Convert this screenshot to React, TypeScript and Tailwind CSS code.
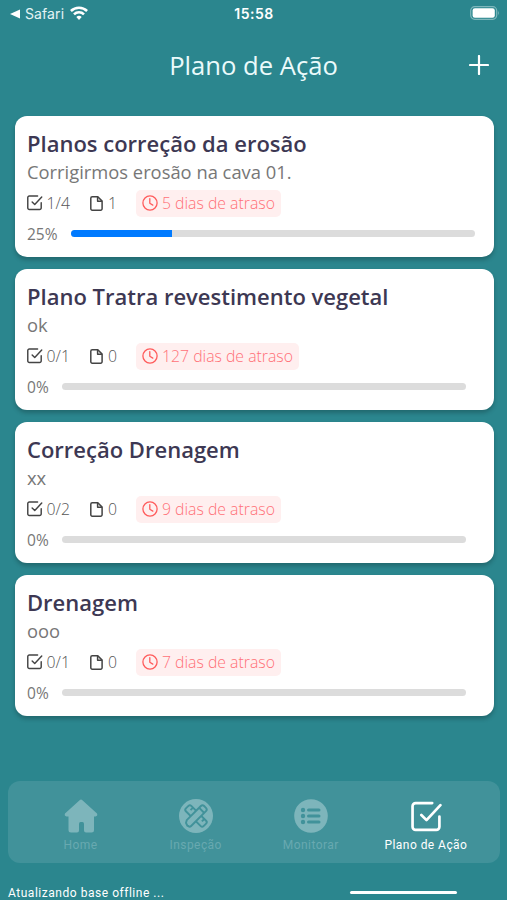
type Plan = {
  title: string;
  description: string;
  tasks: string;
  files: string;
  delay: string;
  progress: number;
};

const plans: Plan[] = [
  { title: 'Planos correção da erosão', description: 'Corrigirmos erosão na cava 01.', tasks: '1/4', files: '1', delay: '5 dias de atraso', progress: 25 },
  { title: 'Plano Tratra revestimento vegetal', description: 'ok', tasks: '0/1', files: '0', delay: '127 dias de atraso', progress: 0 },
  { title: 'Correção Drenagem', description: 'xx', tasks: '0/2', files: '0', delay: '9 dias de atraso', progress: 0 },
  { title: 'Drenagem', description: 'ooo', tasks: '0/1', files: '0', delay: '7 dias de atraso', progress: 0 },
];

function CheckSquare({ className, strokeWidth }: { className: string; strokeWidth: number }) {
  return (
    <svg viewBox="0 0 30 30" className={className} fill="none" stroke="currentColor" strokeWidth={strokeWidth} strokeLinecap="round" strokeLinejoin="round">
      <path d="M20.5 2H4.5A3 3 0 0 0 1.5 5v20a3 3 0 0 0 3 3h20a3 3 0 0 0 3-3V15" />
      <path d="M10 13.5l5 5L28.5 4" />
    </svg>
  );
}

function FileIcon() {
  return (
    <svg viewBox="0 0 13 15" className="h-[15px] w-[13px]" fill="none" stroke="#444" strokeWidth="1.5" strokeLinejoin="round">
      <path d="M2.2.8h5.6l4.3 4.3v7.7a1.4 1.4 0 0 1-1.4 1.4H2.2A1.4 1.4 0 0 1 .8 12.8V2.2A1.4 1.4 0 0 1 2.2.8z" />
      <path d="M7.6.8v4.5h4.5" />
    </svg>
  );
}

function ClockIcon() {
  return (
    <svg viewBox="0 0 16 16" className="-mt-px h-4 w-4 shrink-0" fill="none" stroke="#ff5b5b" strokeWidth="1.3" strokeLinecap="round" strokeLinejoin="round">
      <circle cx="8" cy="8" r="7.1" />
      <path d="M7.8 3.6v4.7l3 1.8" />
    </svg>
  );
}

function PlanCard({ plan }: { plan: Plan }) {
  return (
    <article className="h-[141px] rounded-[12px] bg-white pl-[12.5px] pt-[13px] shadow-[0_3px_4px_rgba(0,0,0,0.22)]">
      <h2 className="h-[29px] whitespace-nowrap text-[22px] font-semibold leading-[29px] text-[#3d3853]">{plan.title}</h2>
      <p className="h-[26px] whitespace-nowrap text-[18.35px] leading-[27px] text-[#777]">{plan.description}</p>
      <div className="mt-[6px] flex h-[27px] items-center text-[15.8px] font-light leading-[27px] text-[#555]">
        <div className="flex w-[63px] items-center gap-[4px]">
          <CheckSquare className="-mt-px h-[15.5px] w-[15.5px] text-[#444]" strokeWidth={2.8} />
          <span>{plan.tasks}</span>
        </div>
        <div className="flex w-[46px] items-center gap-[5px]">
          <FileIcon />
          <span>{plan.files}</span>
        </div>
        <div className="flex h-[27px] items-center gap-[4px] rounded-[5px] bg-[#ffefef] px-[6px] text-[#ff7178]">
          <ClockIcon />
          <span className="whitespace-nowrap">{plan.delay}</span>
        </div>
      </div>
      <div className="mt-[6px] flex h-[21px] items-center text-[15.5px] leading-[22px] text-[#777]">
        <span>{plan.progress}%</span>
        <div className="ml-[13px] h-[7px] w-[404.5px] overflow-hidden rounded-full bg-[#dcdcdc]">
          <div className="h-full bg-[#007aff]" style={{ width: `${plan.progress}%` }} />
        </div>
      </div>
    </article>
  );
}

function HomeIcon() {
  return (
    <svg viewBox="0 0 34 34" className="h-[34px] w-[34px]" fill="#7db5bb">
      <path d="M15.6 1.2Q17 0 18.4 1.2L33 14.5Q34 16.8 31.5 17.5H30V31Q30 33.5 27.5 33.5H22Q20 33.5 20 31.5V25Q20 23 18.5 23H16.5Q15 23 15 25V31.5Q15 33.5 13 33.5H7Q4.5 33.5 4.5 31V17.5H2.5Q0 16.8 1 14.5Z" />
    </svg>
  );
}

function ToolsIcon() {
  return (
    <svg viewBox="0 0 34 34" className="h-[34px] w-[34px]">
      <circle cx="17" cy="17" r="17" fill="#7db5bb" />
      <g fill="#7db5bb" stroke="#41929a" strokeWidth="1.9" strokeLinejoin="round">
        <g transform="rotate(45 17 17)">
          <rect x="4.5" y="13.2" width="25" height="7.6" rx="2" />
          <path d="M9 13.2v3.5M25 13.2v3.5" />
        </g>
        <g transform="rotate(-45 17 17)">
          <path d="M4 17.8l1-3 2.500-1.400h20a2.300 2.300 0 0 1 2.300 2.300v2.600a2.300 2.300 0 0 1-2.300 2.300H6.500a2 2 0 0 1-2-2z" />
          <path d="M25 13.6v6.8" />
        </g>
      </g>
    </svg>
  );
}

function ListIcon() {
  return (
    <svg viewBox="0 0 34 34" className="h-[34px] w-[34px]">
      <circle cx="17" cy="17" r="16.8" fill="#7db5bb" />
      <g fill="#41929a">
        <circle cx="9" cy="11" r="2.2" />
        <circle cx="9" cy="17" r="2.2" />
        <circle cx="9" cy="23" r="2.2" />
      </g>
      <path d="M14.5 11H25M14.5 17H25M14.5 23H25" stroke="#41929a" strokeWidth="3" strokeLinecap="round" />
    </svg>
  );
}

export default function App() {
  return (
    <div className="flex h-[900px] w-[507px] flex-col overflow-hidden bg-[#2b868e] font-['Open_Sans',sans-serif]">
      <header className="grid h-[28px] grid-cols-3 items-center pl-[10px] pr-[7px] font-['Inter',sans-serif] text-white">
        <div className="flex items-center">
          <svg viewBox="0 0 10 10" className="h-[10px] w-[10px]" fill="currentColor"><path d="M0 5L10 .5v9z" /></svg>
          <span className="ml-[5px] text-[14px] leading-[20px] tracking-[0.1px] text-[#e4f4f5]">Safari</span>
          <svg viewBox="0 0 18 14" className="-mt-[2px] ml-[6px] h-[14px] w-[18px]" fill="none" stroke="currentColor" strokeWidth="2.5">
            <path d="M.9 5a11.5 11.5 0 0 1 16.2 0" />
            <path d="M4 8.3a7 7 0 0 1 10 0" />
            <path d="M9 14l-2.7-2.9a3.9 3.9 0 0 1 5.4 0z" fill="currentColor" stroke="none" />
          </svg>
        </div>
        <span className="pr-[2px] text-center text-[14px] font-semibold leading-[20px] tracking-[0.5px]">15:58</span>
        <svg viewBox="0 0 30 14" className="-mt-[2px] h-[14px] w-[30px] justify-self-end">
          <rect x=".7" y=".7" width="26" height="12.6" rx="4" fill="none" stroke="#7eb7bc" strokeWidth="1.2" />
          <rect x="2.6" y="2.3" width="22.2" height="9.4" rx="2.3" fill="white" />
          <path d="M28.2 4.8q1.7 2.2 0 4.4z" fill="#7eb7bc" />
        </svg>
      </header>

      <div className="grid h-[88px] grid-cols-[1fr_auto_1fr] items-start px-[18px] pt-[20px]">
        <span />
        <h1 className="whitespace-nowrap text-[25.6px] leading-[36px] text-[#eafafb]">Plano de Ação</h1>
        <button aria-label="Adicionar" className="mt-[7px] justify-self-end">
          <svg viewBox="0 0 20 20" className="h-[20px] w-[20px]" stroke="white" strokeWidth="2.2" strokeLinecap="round"><path d="M10 1v18M1 10h18" /></svg>
        </button>
      </div>

      <main className="flex h-[665px] flex-col gap-[12px] pl-[14.5px] pr-[13px]">
        {plans.map((plan) => <PlanCard key={plan.title} plan={plan} />)}
      </main>

      <nav className="ml-[8px] mr-[7.5px] flex h-[82px] shrink-0 rounded-[12px] bg-[#41929a] pl-[15px] pr-[16px] font-['Roboto',sans-serif] text-[12px] tracking-[0.45px] text-[#68a9b0]">
        <div className="flex flex-1 flex-col items-center pt-[18px]">
          <HomeIcon />
          <span className="mt-[4px] leading-[16px]">Home</span>
        </div>
        <div className="flex flex-1 flex-col items-center pt-[18px]">
          <ToolsIcon />
          <span className="mt-[4px] leading-[16px]">Inspeção</span>
        </div>
        <div className="flex flex-1 flex-col items-center pt-[18px]">
          <ListIcon />
          <span className="mt-[4px] leading-[16px]">Monitorar</span>
        </div>
        <div className="flex flex-1 flex-col items-center pt-[18px] text-white">
          <div className="flex h-[34px] items-center pl-px"><CheckSquare className="h-[31px] w-[31px]" strokeWidth={2.6} /></div>
          <span className="mt-[4px] whitespace-nowrap leading-[16px]">Plano de Ação</span>
        </div>
      </nav>

      <footer className="flex flex-1 items-end justify-between pl-[8px] pr-[50px] text-white">
        <span className="-mb-px font-['Roboto',sans-serif] text-[12px] leading-[16px] tracking-[0.53px]">Atualizando base offline ...</span>
        <span className="mb-[6px] h-[3px] w-[107px] rounded-full bg-white" />
      </footer>
    </div>
  );
}
